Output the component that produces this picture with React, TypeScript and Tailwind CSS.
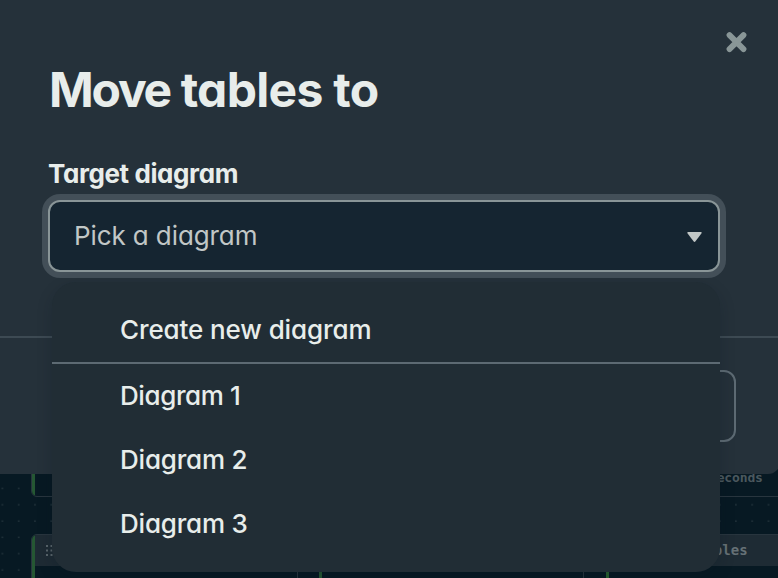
const ui = "font-['Inter','Liberation_Sans',sans-serif] [font-feature-settings:'cv11','ss03']";

function Canvas() {
  return (
    <div className="absolute inset-0 bg-[#071923]">
      <svg className="absolute inset-0" width="778" height="578">
        <defs>
          <pattern id="grid" x="1.5" y="471" width="16.3" height="16.3" patternUnits="userSpaceOnUse">
            <rect x="0.3" y="0.6" width="1.2" height="1.2" fill="#33434a" />
          </pattern>
        </defs>
        <rect y="474" width="778" height="104" fill="url(#grid)" />
      </svg>
      <div className="absolute left-[31px] top-[440px] h-[57px] w-[267px] overflow-hidden rounded-md border border-[#28353e] bg-[#071923]">
        <div className="h-full w-[3px] bg-[#255733]" />
      </div>
      <div className="absolute left-[31px] top-[534px] flex h-20 w-[267px] overflow-hidden rounded-md border border-[#28353e] bg-[#071923]">
        <div className="w-[3px] bg-[#255733]" />
        <div className="flex h-[31px] grow items-center bg-[#1e2b34] pl-[11px]">
          <svg width="10" height="12" fill="#59656b">
            {[0, 4.5, 9].map((y) =>
              [0, 4.5].map((x) => <rect key={`${x}-${y}`} x={x} y={y} width="2" height="2" />)
            )}
          </svg>
        </div>
      </div>
      <div className="absolute left-[319px] top-[534px] h-20 w-[265px] border-r border-[#28353e] bg-[#071923]">
        <div className="h-full w-[3px] bg-[#255733]" />
      </div>
      <div className="absolute left-[606px] top-[440px] flex h-[57px] w-[190px] items-end border-b border-[#28353e] bg-[#071923] pb-[10px] pl-[103px] font-['DejaVu_Sans_Mono',monospace] text-[13px] font-bold leading-4 tracking-[-0.15px] text-[#4b585e]">
        seconds
      </div>
      <div className="absolute left-[606px] top-[534px] flex h-20 w-[190px] border-t border-[#28353e] bg-[#071923]">
        <div className="w-[3px] bg-[#28602f]" />
        <div className="flex h-[31px] grow items-center bg-[#1e2b34] pb-px pl-[88px] font-['DejaVu_Sans_Mono',monospace] text-sm font-bold text-[#667176]">
          tables
        </div>
      </div>
    </div>
  );
}

function Option({ label, className }: { label: string; className: string }) {
  return (
    <li className="flex h-16 items-center pb-0.5 pl-[68px]">
      <span className={className}>{label}</span>
    </li>
  );
}

export default function App() {
  return (
    <div className={`relative h-[578px] w-[778px] overflow-hidden text-[#e8edeb] ${ui}`}>
      <Canvas />
      <div className="relative flex h-[474px] w-[780px] flex-col rounded-br-xl bg-[#25313a]">
        <div className="flex h-[60px] justify-end pr-[33px] pt-8">
          <button className="size-[21px]" aria-label="Close">
            <svg width="21" height="21" viewBox="0 0 21 21" stroke="#899697" strokeWidth="5.8" strokeLinecap="round">
              <path d="M3.5 3.1 17.5 17.1M17.5 3.1 3.5 17.1" />
            </svg>
          </button>
        </div>
        <div className="relative h-[278px] border-b-2 border-[#3d4a53] pl-12">
          <h1 className="h-[60px] whitespace-nowrap pl-px text-[48px] font-bold leading-[60px] tracking-[-0.7px]">
            <span className="tracking-[-2.2px]">Move</span> tables to
          </h1>
          <label className="mt-[38px] block h-8 whitespace-nowrap text-[26px] font-bold leading-8 tracking-[-0.4px]">Target diagram</label>
          <div className="relative mt-[10px] flex h-[72px] w-[672px] items-center justify-between rounded-xl border-2 border-[#899597] bg-[#152531] pl-6 pr-4 text-[#c1c7c6] ring-[6px] ring-[#434f58]">
            <span className="pb-0.5 text-[26px] tracking-[-0.1px]">Pick a diagram</span>
            <svg width="15" height="11" fill="#c1c7c6" className="mt-[3px]">
              <path d="M1.2 0H13.8Q15.3.2 14.4 1.6L8.5 9.3Q7.5 10.5 6.5 9.3L.6 1.6Q-.3.2 1.2 0Z" />
            </svg>
          </div>
          <ul className="absolute left-[52px] top-[222px] h-[290px] w-[668px] rounded-[24px] bg-[#212d35] pt-4 text-[26px] font-medium shadow-[0_6px_16px_rgba(0,18,28,0.2)]">
            <Option label="Create new diagram" className="tracking-[-0.1px]" />
            <li className="h-0.5 bg-[#5d6a73]" />
            <Option label="Diagram 1" className="tracking-[-0.4px]" />
            <Option label="Diagram 2" className="tracking-[-0.2px]" />
            <Option label="Diagram 3" className="tracking-[-0.2px]" />
          </ul>
        </div>
        <div className="flex justify-end pr-11 pt-8">
          <button className="h-[72px] w-[180px] rounded-xl border-2 border-[#5d6a73]" aria-label="Cancel" />
        </div>
      </div>
    </div>
  );
}
